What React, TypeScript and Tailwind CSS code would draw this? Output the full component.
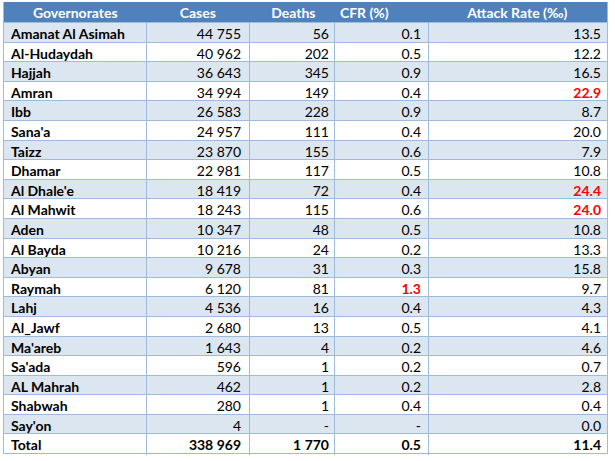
const rows: [string, string, string, string, string, boolean?, boolean?][] = [
  ["Amanat Al Asimah", "44 755", "56", "0.1", "13.5"],
  ["Al-Hudaydah", "40 962", "202", "0.5", "12.2"],
  ["Hajjah", "36 643", "345", "0.9", "16.5"],
  ["Amran", "34 994", "149", "0.4", "22.9", false, true],
  ["Ibb", "26 583", "228", "0.9", "8.7"],
  ["Sana'a", "24 957", "111", "0.4", "20.0"],
  ["Taizz", "23 870", "155", "0.6", "7.9"],
  ["Dhamar", "22 981", "117", "0.5", "10.8"],
  ["Al Dhale'e", "18 419", "72", "0.4", "24.4", false, true],
  ["Al Mahwit", "18 243", "115", "0.6", "24.0", false, true],
  ["Aden", "10 347", "48", "0.5", "10.8"],
  ["Al Bayda", "10 216", "24", "0.2", "13.3"],
  ["Abyan", "9 678", "31", "0.3", "15.8"],
  ["Raymah", "6 120", "81", "1.3", "9.7", true],
  ["Lahj", "4 536", "16", "0.4", "4.3"],
  ["Al_Jawf", "2 680", "13", "0.5", "4.1"],
  ["Ma'areb", "1 643", "4", "0.2", "4.6"],
  ["Sa'ada", "596", "1", "0.2", "0.7"],
  ["AL Mahrah", "462", "1", "0.2", "2.8"],
  ["Shabwah", "280", "1", "0.4", "0.4"],
  ["Say'on", "4", "-", "-", "0.0"],
];

const cols = "grid grid-cols-[143px_103px_85px_94px_180px]";
const cell = "border-r border-[#9fbbdc] last:border-r-0 flex items-center whitespace-pre";

function Row({ r, idx }: { r: (typeof rows)[number]; idx: number }) {
  const bg = idx % 2 === 0 ? "bg-[#dce6f1]" : "bg-white";
  return (
    <div className={`${cols} ${bg} h-[19.6px] border-t border-[#9fbbdc] text-[14px] text-black`}>
      <div className={`${cell} pl-[7px] font-bold`}>{r[0]}</div>
      <div className={`${cell} justify-end pr-[8px]`}>{r[1]}</div>
      <div className={`${cell} justify-end pr-[5px]`}>{r[2]}</div>
      <div className={`${cell} justify-end pr-[7px] ${r[5] ? "text-[#ff0000] font-bold" : ""}`}>{r[3]}</div>
      <div className={`${cell} justify-end pr-[8px] ${r[6] ? "text-[#ff0000] font-bold" : ""}`}>{r[4]}</div>
    </div>
  );
}

export default function App() {
  return (
    <div className="w-[615px] h-[461px] bg-white pt-[2px] pl-[3px]" style={{ fontFamily: "Lato, 'Open Sans', sans-serif" }}>
      <div className="w-[605px] border border-[#9fbbdc] border-t-0">
        {/* Header */}
        <div className="flex h-[20px] bg-[#4f81bd] text-white font-bold text-[14px] items-center">
          <div className="w-[143px] text-center">Governorates</div>
          <div className="w-[103px] text-center">Cases</div>
          <div className="w-[85px] pl-[22px]">Deaths</div>
          <div className="w-[94px] pl-[6px]">CFR (%)</div>
          <div className="w-[180px] text-center">Attack Rate (‰)</div>
        </div>

        {rows.map((r, i) => (
          <Row key={r[0]} r={r} idx={i} />
        ))}

        {/* Total */}
        <div className={`${cols} bg-white h-[19.6px] border-t border-[#9fbbdc] text-[14px] font-bold text-black`}>
          <div className={`${cell} pl-[7px]`}>Total</div>
          <div className={`${cell} justify-end pr-[8px]`}>338 969</div>
          <div className={`${cell} justify-end pr-[5px]`}>1 770</div>
          <div className={`${cell} justify-end pr-[7px]`}>0.5</div>
          <div className={`${cell} justify-end pr-[8px]`}>11.4</div>
        </div>
      </div>
    </div>
  );
}
